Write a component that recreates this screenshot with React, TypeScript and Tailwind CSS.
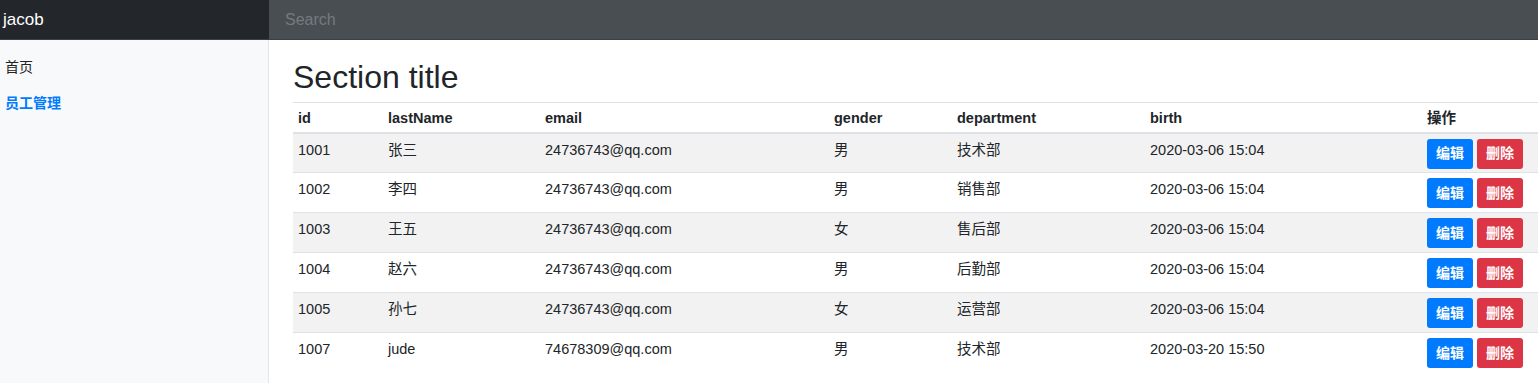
import React from "react";

const rows = [
  { id: "1001", name: "张三", email: "24736743@qq.com", gender: "男", dept: "技术部", birth: "2020-03-06 15:04" },
  { id: "1002", name: "李四", email: "24736743@qq.com", gender: "男", dept: "销售部", birth: "2020-03-06 15:04" },
  { id: "1003", name: "王五", email: "24736743@qq.com", gender: "女", dept: "售后部", birth: "2020-03-06 15:04" },
  { id: "1004", name: "赵六", email: "24736743@qq.com", gender: "男", dept: "后勤部", birth: "2020-03-06 15:04" },
  { id: "1005", name: "孙七", email: "24736743@qq.com", gender: "女", dept: "运营部", birth: "2020-03-06 15:04" },
  { id: "1007", name: "jude", email: "74678309@qq.com", gender: "男", dept: "技术部", birth: "2020-03-20 15:50" },
];

const font = { fontFamily: '"Liberation Sans", "Noto Sans CJK SC", Arial, sans-serif' };

export default function App() {
  return (
    <div className="flex h-screen flex-col bg-white text-[#212529]" style={font}>
      <nav className="flex h-[40px] shrink-0 border-b border-[#3b4045]">
        <div className="flex w-[269px] items-center bg-[#23272b] pl-[3px] text-[17px] text-white">jacob</div>
        <div className="flex flex-1 items-center bg-[#494e53] pl-[16px] text-[16px] text-[#747a80]">Search</div>
      </nav>
      <div className="flex flex-1">
        <aside className="w-[269px] shrink-0 border-r border-[#e3e5e8] bg-[#f8f9fa] pt-[17px] pl-[5px] text-[14px]">
          <div className="h-[20px] leading-[20px] text-[#222]">首页</div>
          <div className="mt-[16px] h-[20px] font-bold leading-[20px] text-[#007bff]">员工管理</div>
        </aside>
        <main className="flex-1 pl-[24px]">
          <h2 className="mt-[18px] mb-[6px] h-[38px] text-[32px] leading-[38px] text-[#212529]">Section title</h2>
          <table className="w-[1245px] table-fixed border-collapse text-[14.5px]">
            <colgroup>
              <col className="w-[90px]" />
              <col className="w-[157px]" />
              <col className="w-[289px]" />
              <col className="w-[123px]" />
              <col className="w-[193px]" />
              <col className="w-[277px]" />
              <col className="w-[116px]" />
            </colgroup>
            <thead>
              <tr className="border-t border-b-2 border-[#dee2e6]">
                {["id", "lastName", "email", "gender", "department", "birth", "操作"].map((h) => (
                  <th key={h} className="h-[30px] px-[5px] pt-[5px] text-left align-top font-bold leading-[20px]">
                    {h}
                  </th>
                ))}
              </tr>
            </thead>
            <tbody>
              {rows.map((r, i) => (
                <tr key={r.id} className={`border-t border-[#dee2e6] ${i % 2 === 0 ? "bg-[#f2f2f2]" : "bg-white"}`}>
                  <td className="h-[40px] px-[5px] pt-[6px] align-top leading-[21px]">{r.id}</td>
                  <td className="px-[5px] pt-[6px] align-top leading-[21px]">{r.name}</td>
                  <td className="px-[5px] pt-[6px] align-top leading-[21px]">{r.email}</td>
                  <td className="px-[5px] pt-[6px] align-top leading-[21px]">{r.gender}</td>
                  <td className="px-[5px] pt-[6px] align-top leading-[21px]">{r.dept}</td>
                  <td className="px-[5px] pt-[6px] align-top leading-[21px]">{r.birth}</td>
                  <td className="px-[5px] pt-[5px] align-top">
                    <div className="flex gap-[4px]">
                      <button className="h-[30px] w-[46px] rounded-[3px] bg-[#007bff] text-[14px] font-bold text-white">编辑</button>
                      <button className="h-[30px] w-[46px] rounded-[3px] bg-[#dc3545] text-[14px] font-bold text-white">删除</button>
                    </div>
                  </td>
                </tr>
              ))}
            </tbody>
          </table>
        </main>
      </div>
    </div>
  );
}
